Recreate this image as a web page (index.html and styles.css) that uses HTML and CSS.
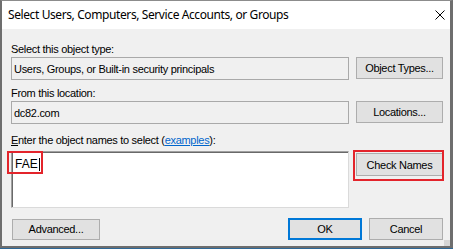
FILE: index.html
```html
<!DOCTYPE html>
<html>
<head>
<meta charset="utf-8">
<link rel="stylesheet" href="styles.css">
</head>
<body>
<div class="window">
  <div class="frame">
    <div class="titlebar">
      <span class="title">Select Users, Computers, Service Accounts, or Groups</span>
      <svg class="close" width="10" height="10" viewBox="0 0 10 10"><path d="M0.5 0.5 L9.5 9.5 M9.5 0.5 L0.5 9.5" stroke="#000" stroke-width="1" fill="none"/></svg>
    </div>
    <div class="content">
      <div class="label l1">Select this object type:</div>
      <div class="row">
        <div class="field">Users, Groups, or Built-in security principals</div>
        <div class="btn">Object Types...</div>
      </div>
      <div class="label l2">From this location:</div>
      <div class="row">
        <div class="field">dc82.com</div>
        <div class="btn">Locations...</div>
      </div>
      <div class="label l3"><u>E</u>nter the object names to select (<a class="link">examples</a>):</div>
      <div class="row names">
        <div class="memo">
          <span class="entry">FAE<span class="caret"></span></span>
          <span class="hl hl-fae"></span>
        </div>
        <div class="check">
          <div class="btn btn-check">Check Names</div>
          <span class="hl hl-check"></span>
        </div>
      </div>
      <div class="footer">
        <div class="btn btn-adv">Advanced...</div>
        <div class="spacer"></div>
        <div class="btn btn-ok">OK</div>
        <div class="btn btn-cancel">Cancel</div>
      </div>
      <span class="grip"></span>
    </div>
  </div>
</div>
</body>
</html>
```
FILE: styles.css
```css
html, body {
  margin: 0;
  padding: 0;
  background: #ffffff;
}
.window {
  width: 453px;
  height: 249px;
  box-sizing: border-box;
  border-bottom: 1px solid #2d6898;
  overflow: hidden;
}
.frame {
  height: 100%;
  box-sizing: border-box;
  border-left: 2px solid #6e6e6e;
  border-top: 1px solid #8c8c8c;
  border-right: 3px solid #6e6e6e;
  border-bottom: 2px solid #6e6e6e;
  display: flex;
  flex-direction: column;
  background: #f0f0f0;
}
.titlebar {
  height: 28px;
  background: #ffffff;
  display: flex;
  align-items: center;
  justify-content: space-between;
  padding: 0 5px 0 6px;
  flex: none;
}
.title {
  font-family: "Noto Sans", "Open Sans", sans-serif;
  font-size: 12px;
  letter-spacing: -0.4px;
  color: #000;
  margin-top: -1px;
}
.close {
  display: block;
}
.content {
  position: relative;
  flex: 1;
  padding: 14px 7px 0 9px;
  font-family: "Liberation Sans", Arial, sans-serif;
  font-size: 11px;
  letter-spacing: -0.3px;
  color: #000;
}
.label {
  line-height: 13px;
  height: 13px;
}
.l1 { margin-bottom: 1px; }
.l2 { margin-top: 7px; margin-bottom: 1px; }
.l3 { margin-top: 10px; margin-bottom: 4px; }
.link {
  color: #0066cc;
  text-decoration: underline;
}
.row {
  display: grid;
  grid-template-columns: 1fr 87px;
  column-gap: 7px;
  align-items: start;
}
.field {
  height: 23px;
  box-sizing: border-box;
  border: 1px solid #a9a9a9;
  background: #f0f0f0;
  display: flex;
  align-items: center;
  padding-left: 2px;
}
.btn {
  height: 22px;
  box-sizing: border-box;
  border: 1px solid #adadad;
  background: #e1e1e1;
  display: flex;
  align-items: center;
  justify-content: center;
  font-family: "Liberation Sans", Arial, sans-serif;
  font-size: 11px;
}
.names {
  height: 57px;
}
.memo {
  position: relative;
  height: 57px;
  box-sizing: border-box;
  background: #ffffff;
  border-top: 1px solid #a0a0a0;
  border-left: 1px solid #a0a0a0;
  border-right: 1px solid #dadada;
  border-bottom: 1px solid #dadada;
  box-shadow: inset 1px 1px 0 #696969;
  padding: 5px 0 0 3px;
}
.entry {
  font-size: 12px;
  letter-spacing: 0;
  line-height: 14px;
  display: inline-flex;
  align-items: center;
}
.caret {
  display: inline-block;
  width: 1px;
  height: 13px;
  background: #000;
  margin-left: 1px;
}
.check {
  position: relative;
  padding-top: 2px;
}
.btn-check {
  height: 23px;
}
.hl {
  position: absolute;
  box-sizing: border-box;
  border: 2px solid #e3242b;
}
.hl-fae {
  left: -5px;
  top: -1px;
  width: 36px;
  height: 23px;
}
.hl-check {
  left: -3px;
  top: -1px;
  width: 91px;
  height: 31px;
}
.footer {
  display: flex;
  align-items: center;
  margin-top: 10px;
  column-gap: 7px;
}
.spacer { flex: 1; }
.btn-adv {
  width: 88px;
  margin-left: 1px;
  height: 21px;
}
.btn-ok {
  width: 74px;
  height: 22px;
  border: 2px solid #0078d7;
}
.btn-cancel {
  width: 74px;
  height: 22px;
}
.grip {
  position: absolute;
  right: 0;
  bottom: 0;
  width: 6px;
  height: 6px;
  background-image: radial-gradient(circle, #b8b8b8 0.6px, transparent 0.8px);
  background-size: 2px 2px;
}
```
